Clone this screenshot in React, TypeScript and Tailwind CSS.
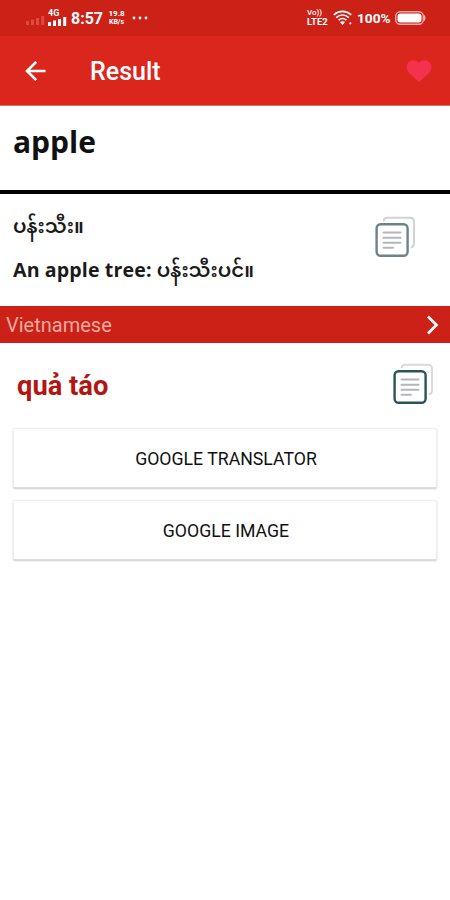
const actions = ["GOOGLE TRANSLATOR", "GOOGLE IMAGE"];

function CopyIcon({ front, back }: { front: string; back: string }) {
  return (
    <svg width="41" height="42" viewBox="0 0 41 42" fill="none" strokeLinecap="round">
      <path
        d="M8.8 4.5C9 2.8 10 1.7 12 1.7H35C37.8 1.7 39 3 39 5.5V27C39 29.5 38.3 30.8 36.6 31.3"
        className={back}
        strokeWidth="2"
      />
      <rect x="1.6" y="8.3" width="31" height="31.4" rx="4" className={front} strokeWidth="2.4" />
      <path d="M8.5 16.5H25.5M8.5 21.7H25.5M8.5 26.7H25.5M8.5 31.7H18" className="stroke-[#b2b7b8]" strokeWidth="2" />
    </svg>
  );
}

function Signal({ className }: { className: string }) {
  return (
    <svg width="19" height="10" viewBox="0 0 19 10" className={className}>
      <rect x="0" y="5" width="3" height="4" />
      <rect x="5" y="3.5" width="3" height="5.5" />
      <rect x="10" y="2" width="3" height="7" />
      <rect x="15.2" y="0" width="3" height="9" />
    </svg>
  );
}

function StatusBar() {
  return (
    <div className="flex h-9 items-center justify-between bg-[#cb2117] pr-6 pl-[26px] text-white">
      <div className="flex items-center">
        <Signal className="mt-1.5 fill-[#dc4a40]" />
        <div className="ml-[3px] flex flex-col">
          <span className="h-2 text-[9px] leading-[8px] font-bold">4G</span>
          <Signal className="fill-white" />
        </div>
        <span className="ml-1 w-[33px] pt-0.5 text-[16px] leading-5 font-bold whitespace-nowrap">8:57</span>
        <div className="ml-[3px] flex w-[19px] flex-col text-center text-[8px] leading-[9px] font-bold whitespace-nowrap">
          <span>19.8</span>
          <span className="text-[7px]">KB/s</span>
        </div>
        <svg width="16" height="4" viewBox="0 0 16 4" className="ml-1.5 fill-white">
          <circle cx="2" cy="2" r="1.4" />
          <circle cx="8" cy="2" r="1.4" />
          <circle cx="14" cy="2" r="1.4" />
        </svg>
      </div>
      <div className="flex items-center">
        <div className="flex w-[23px] flex-col text-[9.5px] leading-[10px] font-bold whitespace-nowrap">
          <span className="h-2 text-[8px] leading-[8px] font-medium">Vo))</span>
          <span>LTE2</span>
        </div>
        <svg width="20" height="16" viewBox="0 0 20 16" fill="none" className="ml-[3px] stroke-white" strokeWidth="1.6">
          <path d="M.8 4.8C6 .2 13 .2 18.200 4.800M3.200 7.600C7 4.200 12 4.200 15.800 7.600M5.600 10.200C8 8.100 11 8.100 13.400 10.200" />
          <path d="M7.300 12C8.500 11.200 10.500 11.200 11.700 12L9.500 14.800Z" className="fill-white" strokeWidth=".5" />
          <circle cx="17.3" cy="13.3" r="1.1" className="fill-white" strokeWidth="0" />
        </svg>
        <span className="ml-1 w-[35px] pt-px text-[13.7px] font-bold whitespace-nowrap">100%</span>
        <svg width="31" height="14" viewBox="0 0 31 14" className="ml-[3px]">
          <rect x=".7" y=".7" width="27.6" height="12.6" rx="4.5" fill="none" className="stroke-[#f0aaa5]" strokeWidth="1.4" />
          <rect x="2.5" y="2.5" width="24" height="9" rx="3" className="fill-white" />
          <path d="M29 4C31 5 31 9 29 10Z" className="fill-[#f3c1bd]" />
        </svg>
      </div>
    </div>
  );
}

function AppBar() {
  return (
    <header className="flex h-[70px] items-center border-b border-[#dc6d67] bg-[#db261d] pr-[18px] pl-[25px]">
      <svg width="22" height="22" viewBox="0 0 22 22" fill="none" className="stroke-white" strokeWidth="2.6">
        <path d="M20.5 11H2.5M11.2 1.8L2 11L11.2 20.2" />
      </svg>
      <h1 className="ml-[43px] pt-0.5 text-[25px] font-medium text-white">Result</h1>
      <svg width="26" height="24" viewBox="0 0 26 24" className="ml-auto fill-[#f4324d]">
        <path d="M13 23L3 14C0 10.5 0 5.5 3 3C6 .5 10.500 .8 13 4C15.500 .8 20 .5 23 3C26 5.500 26 10.500 23 14Z" />
      </svg>
    </header>
  );
}

export default function App() {
  return (
    <div className="h-[900px] w-[450px] overflow-hidden bg-white font-[Roboto,sans-serif]">
      <StatusBar />
      <AppBar />

      <div className="h-[88px] border-b-[4px] border-black px-[13px] pt-4 font-['Open_Sans',sans-serif]">
        <h2 className="text-[30px] leading-10 font-bold text-[#111]">apple</h2>
      </div>

      <section className="flex h-28 justify-between pr-[34px] pl-[13px] font-['Open_Sans','Noto_Sans_Myanmar',sans-serif] text-[19.6px] font-bold whitespace-nowrap text-[#1a1a1a]">
        <div className="pt-[10px]">
          <p className="h-11 leading-[44px] font-semibold">ပန်းသီး။</p>
          <p className="h-11 leading-[44px]">
            <span className="tracking-[0.12px]">An apple tree: </span>
            <span className="font-semibold">ပန်းသီးပင်။</span>
          </p>
        </div>
        <div className="pt-[22px]">
          <CopyIcon front="stroke-[#6d8289]" back="stroke-[#d0d3d4]" />
        </div>
      </section>

      <div className="flex h-[37px] items-center justify-between bg-[#cb2117] pr-[11px] pl-[6px]">
        <span className="text-[20px] text-[#f5aaa0]">Vietnamese</span>
        <svg width="13" height="20" viewBox="0 0 13 20" fill="none" className="stroke-white" strokeWidth="2.7">
          <path d="M2 1.5L10.5 10L2 18.5" />
        </svg>
      </div>

      <div className="flex h-[85px] items-start justify-between pt-5 pr-4 pl-[17px]">
        <p className="pt-[5px] text-[27.3px] leading-9 font-bold text-[#b31510]">quả táo</p>
        <CopyIcon front="stroke-[#28545d]" back="stroke-[#d9dbdb]" />
      </div>

      <div className="flex flex-col gap-[12px] px-[13px]">
        {actions.map((label) => (
          <button
            key={label}
            className="h-[60px] rounded-xs border border-[#eee] border-b-[#ddd] bg-white pt-0.5 pl-0.5 text-[17.7px] text-[#111] shadow-[0_1px_2px_#ccc]"
          >
            {label}
          </button>
        ))}
      </div>
    </div>
  );
}
